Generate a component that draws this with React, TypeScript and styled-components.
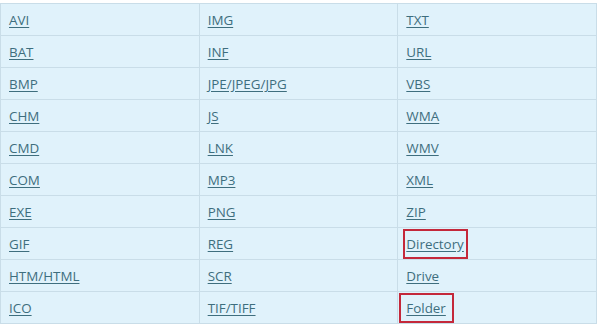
import styled, { createGlobalStyle } from "styled-components";

const GlobalStyle = createGlobalStyle`
  body {
    margin: 0;
    background: #ffffff;
    font-family: "Open Sans", "Noto Sans", sans-serif;
  }
`;

const rows: [string, string, string][] = [
  ["AVI", "IMG", "TXT"],
  ["BAT", "INF", "URL"],
  ["BMP", "JPE/JPEG/JPG", "VBS"],
  ["CHM", "JS", "WMA"],
  ["CMD", "LNK", "WMV"],
  ["COM", "MP3", "XML"],
  ["EXE", "PNG", "ZIP"],
  ["GIF", "REG", "Directory"],
  ["HTM/HTML", "SCR", "Drive"],
  ["ICO", "TIF/TIFF", "Folder"],
];

// names that carry a red marker box, with the box's side padding
const boxed: Record<string, number> = { Directory: 1, Folder: 5 };

export default function App() {
  return (
    <>
      <GlobalStyle />
      <Wrapper>
        <Table>
          <tbody>
            {rows.map((row) => (
              <tr key={row[0]}>
                {row.map((name) => (
                  <Cell key={name}>
                    {name in boxed ? (
                      <Marked $pad={boxed[name]}>
                        <Link href="#">{name}</Link>
                      </Marked>
                    ) : (
                      <Link href="#">{name}</Link>
                    )}
                  </Cell>
                ))}
              </tr>
            ))}
          </tbody>
        </Table>
      </Wrapper>
    </>
  );
}

const Wrapper = styled.div`
  padding-top: 3px;
  width: 597px;
`;

const Table = styled.table`
  width: 597px;
  border-collapse: collapse;
  table-layout: fixed;
  background: #e0f2fb;
`;

const Cell = styled.td`
  width: 33.33%;
  height: 31px;
  padding: 0 0 0 8px;
  border: 1px solid #c9dde8;
  font-size: 13.4px;
  line-height: 18px;
  vertical-align: middle;
`;

const Link = styled.a`
  color: #3e6e7e;
  text-decoration: underline;
  text-underline-offset: 2px;
`;

const Marked = styled.span<{ $pad: number }>`
  display: inline-block;
  margin-left: ${({ $pad }) => -($pad + 2)}px;
  padding: 4px ${({ $pad }) => $pad + 1}px 4px ${({ $pad }) => $pad}px;
  border: 2px solid #c4283a;
`;
